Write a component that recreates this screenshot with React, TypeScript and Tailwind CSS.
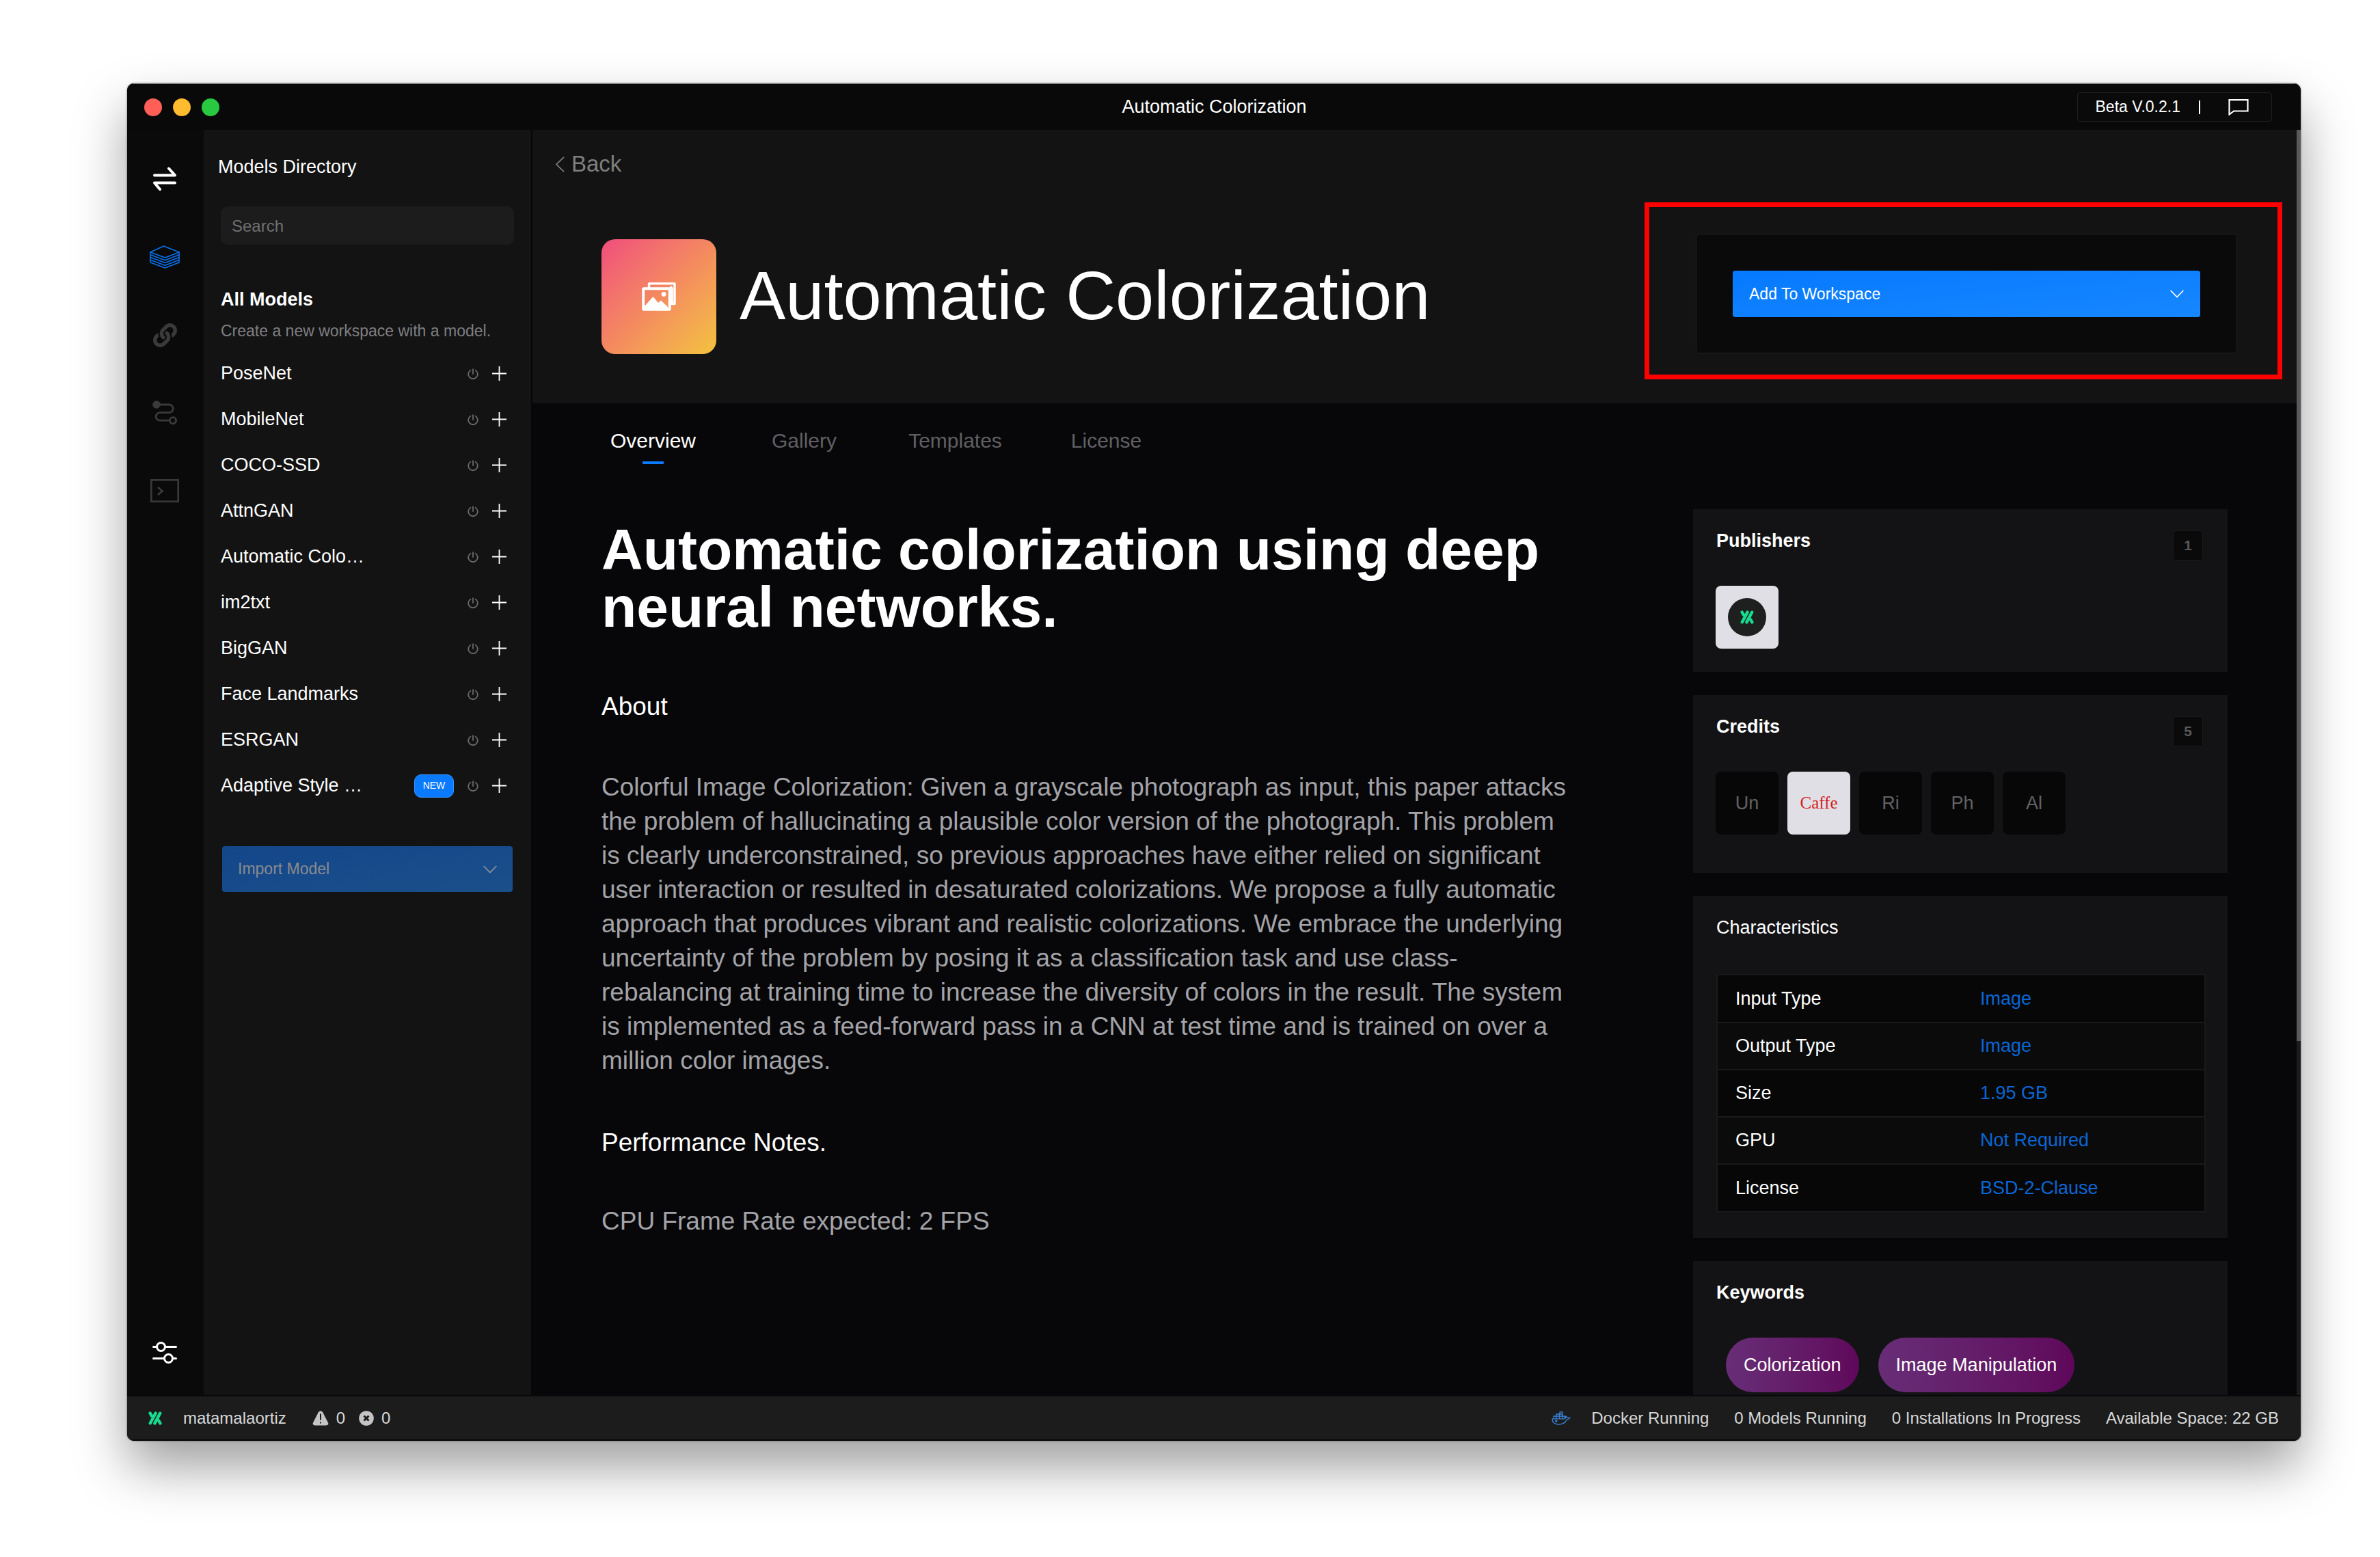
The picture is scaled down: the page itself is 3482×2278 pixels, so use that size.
import React from "react";
import { FaLink } from "react-icons/fa";

const models: { name: string; isNew?: boolean }[] = [
  { name: "PoseNet" },
  { name: "MobileNet" },
  { name: "COCO-SSD" },
  { name: "AttnGAN" },
  { name: "Automatic Colo…" },
  { name: "im2txt" },
  { name: "BigGAN" },
  { name: "Face Landmarks" },
  { name: "ESRGAN" },
  { name: "Adaptive Style …", isNew: true },
];

const tabs = ["Overview", "Gallery", "Templates", "License"];

const characteristics = [
  ["Input Type", "Image"],
  ["Output Type", "Image"],
  ["Size", "1.95 GB"],
  ["GPU", "Not Required"],
  ["License", "BSD-2-Clause"],
];

function SwapIcon() {
  return (
    <svg width="36" height="36" viewBox="0 0 36 36" fill="none" stroke="#fff" strokeWidth="4" strokeLinecap="round" strokeLinejoin="round" aria-hidden="true">
      <path d="M3 12.5H33L24 2.5" />
      <path d="M33 23.5H3L11 33" />
    </svg>
  );
}

function LayersIcon() {
  return (
    <svg width="44" height="34" viewBox="0 0 44 34" fill="none" stroke="#0a72f0" strokeWidth="1.5" strokeLinejoin="round" strokeLinecap="round" aria-hidden="true">
      <path d="M20.5 1L43 10L22.5 18L1 10Z" />
      <path d="M1 10V25L22.5 33L43 25V10" />
      <path d="M1 13.75L22.5 21.75L43 13.75" />
      <path d="M1 17.5L22.5 25.5L43 17.5" />
      <path d="M1 21.25L22.5 29.25L43 21.25" />
    </svg>
  );
}

function RouteIcon() {
  return (
    <svg width="36" height="36" viewBox="0 0 36 36" fill="none" stroke="#3a3a3b" strokeWidth="2.8" aria-hidden="true">
      <circle cx="6" cy="6" r="5.8" fill="#3a3a3b" stroke="none" />
      <path d="M6 6H24.5A5.8 5.8 0 0 1 24.5 17.6H11A5.8 5.8 0 0 0 11 29.2H25" />
      <circle cx="30" cy="29.2" r="4.6" />
    </svg>
  );
}

function TerminalIcon() {
  return (
    <svg width="42" height="34" viewBox="0 0 42 34" fill="none" stroke="#3a3a3b" strokeWidth="2.6" aria-hidden="true">
      <rect x="1.3" y="1.3" width="39.4" height="31.4" />
      <path d="M11 12L17.5 17.5L11 23" strokeWidth="2.8" />
    </svg>
  );
}

function SlidersIcon() {
  return (
    <svg width="36" height="32" viewBox="0 0 36 32" fill="none" stroke="#fff" strokeWidth="3" strokeLinecap="round" aria-hidden="true">
      <path d="M1.5 7.5H6M19 7.5H34.5M1.5 24.5H17M30 24.5H34.5" />
      <circle cx="12.5" cy="7.5" r="6" />
      <circle cx="23.5" cy="24.5" r="6" />
    </svg>
  );
}

function BrandMark() {
  return (
    <svg width="20" height="20" viewBox="0 0 20 20" fill="none" stroke="#17dc8f" strokeWidth="4.4" strokeLinecap="round" aria-hidden="true">
      <path d="M2.8 17.2L10.6 2.6M9.4 17.4L17.2 2.8" />
      <path d="M2.6 2.6L4.8 6.4M15.2 13.6L17.4 17.4" />
    </svg>
  );
}

function PowerIcon() {
  return (
    <svg width="16" height="16" viewBox="0 0 16 16" fill="none" stroke="#6e6e70" strokeWidth="1.7" strokeLinecap="round" aria-hidden="true">
      <path d="M4.4 2.6A6.8 6.8 0 1 0 11.6 2.6" />
      <path d="M8 1V8" />
    </svg>
  );
}

function PlusIcon() {
  return (
    <svg width="21" height="21" viewBox="0 0 21 21" stroke="#fff" strokeWidth="1.8" aria-hidden="true">
      <path d="M10.5 0V21M0 10.5H21" />
    </svg>
  );
}

function ChevronDown({ color }: { color: string }) {
  return (
    <svg width="20" height="12" viewBox="0 0 20 12" fill="none" stroke={color} strokeWidth="1.7" aria-hidden="true">
      <path d="M0.6 1L10 10.6L19.4 1" />
    </svg>
  );
}

function ImagesIcon() {
  return (
    <svg width="50" height="42" viewBox="0 0 50 42" aria-hidden="true">
      <path fill="none" stroke="#fff" strokeWidth="3.4" strokeLinejoin="round" d="M10.5 8V1.9H48V31.5H44V9" />
      <path fill="#fff" d="M40 8L43 5L45.5 8V27L48 33H42Z" />
      <rect x="2.2" y="9.2" width="38.6" height="30.6" rx="1" fill="none" stroke="#fff" strokeWidth="4" />
      <path fill="#fff" d="M4 35L16.5 21L24 30L28 26.5L38 36V40H4Z" />
      <circle cx="32" cy="17.5" r="3.4" fill="#fff" />
    </svg>
  );
}

function DockerIcon() {
  return (
    <svg width="28" height="20" viewBox="0 0 28 20" fill="none" stroke="#3a85d8" strokeWidth="1.3" strokeLinejoin="round" aria-hidden="true">
      <path d="M3 10V7H7V4H12V0.8H16V7H19V10.5" />
      <path d="M7 7H16M11.5 4H16M7 7V10.5M11.5 4V10.5M15.5 7V10.5" />
      <path d="M1 10.8H18.5C20.5 10.8 21 9 20 7C22 7 22.5 8.6 23 9.3C24.5 8.6 26 8.8 27 9.5C26 11.2 24.5 11.8 22.5 11.8C20 17 16 19 10.5 19C4 19 1 16 1 10.8Z" />
      <circle cx="6.8" cy="14" r="1.1" fill="#3a85d8" />
    </svg>
  );
}

function WarningIcon() {
  return (
    <svg width="24" height="22" viewBox="0 0 24 22" aria-hidden="true">
      <path fill="#c4c4c4" d="M8.8 2.2Q12 -1.6 15.2 2.2L23 17.4Q24.4 21 20.4 21.4H3.6Q-0.4 21 1 17.4Z" />
      <path d="M12 4.5V13.5M12 16.4V18.6" stroke="#1c1c1c" strokeWidth="2" />
    </svg>
  );
}

function ErrorIcon() {
  return (
    <svg width="22" height="22" viewBox="0 0 22 22" aria-hidden="true">
      <circle cx="11" cy="11" r="10.8" fill="#c4c4c4" />
      <path d="M7.5 7.5L14.5 14.5M14.5 7.5L7.5 14.5" stroke="#1c1c1c" strokeWidth="3" />
    </svg>
  );
}

function TitleBar() {
  return (
    <header className="grid h-[68px] shrink-0 grid-cols-3 items-center border-t border-[#6a6a6a] bg-[#090909] pl-[25px] pr-[42px]">
      <div className="flex gap-4">
        <button aria-label="Close" className="size-[26px] rounded-full bg-[#ff5f57]" />
        <button aria-label="Minimize" className="size-[26px] rounded-full bg-[#febc2e]" />
        <button aria-label="Zoom" className="size-[26px] rounded-full bg-[#28c840]" />
      </div>
      <div className="pl-[18px] text-center text-[27px] text-white">Automatic Colorization</div>
      <div className="flex h-[43px] items-center justify-self-end rounded-[4px] border border-[#1f1f20] bg-[#0a0a0a] pl-[26px] pr-[33px] text-[23px] text-white">
        <span>Beta V.0.2.1</span>
        <span className="ml-[27px] h-5 w-[2px] bg-white" />
        <button aria-label="Feedback" className="ml-[41px]">
          <svg width="30" height="24" viewBox="0 0 30 24" fill="none" stroke="#fff" strokeWidth="2.2" aria-hidden="true">
            <path d="M1.5 1.2H28.5V17.5H8L1.5 22.5Z" />
          </svg>
        </button>
      </div>
    </header>
  );
}

function Rail() {
  const item = "flex h-[114px] w-full items-center justify-center";
  return (
    <nav aria-label="Main" className="flex w-[112px] shrink-0 flex-col items-center bg-[#0a0a0a] pb-[38px] pr-[2px] pt-[15px]">
      <button aria-label="Workspaces" className={item}><SwapIcon /></button>
      <button aria-label="Models" className={item}><LayersIcon /></button>
      <button aria-label="Links" className={item}><FaLink size={35} color="#3a3a3b" /></button>
      <button aria-label="Routes" className={item}><RouteIcon /></button>
      <button aria-label="Console" className={item}><TerminalIcon /></button>
      <button aria-label="Settings" className="mt-auto py-2"><SlidersIcon /></button>
    </nav>
  );
}

function Sidebar() {
  return (
    <aside className="w-[481px] shrink-0 border-r-2 border-[#060606] bg-[#131314] pt-[34px]">
      <h2 className="pl-[21px] text-[27px] leading-10 text-white">Models Directory</h2>
      <div className="px-[25px]">
        <input
          aria-label="Search"
          placeholder="Search"
          className="mt-[38px] block h-14 w-full rounded-[10px] bg-[#1c1c1c] px-4 pt-[2px] text-[24px] text-white placeholder:text-[#707072]"
        />
        <h3 className="mt-[60px] text-[27px] font-bold leading-10 text-white">All Models</h3>
        <p className="mt-[11px] whitespace-nowrap text-[23px] leading-[30px] text-[#7f7f81]">
          Create a new workspace with a model.
        </p>
        <ul className="mt-[14px]">
          {models.map((m) => (
            <li key={m.name} className="flex h-[67px] items-center gap-5 pr-[11px] text-[27px] text-white">
              <a href="#" className="flex-1 whitespace-nowrap">{m.name}</a>
              {m.isNew && (
                <span className="flex h-[34px] w-[58px] items-center justify-center rounded-[10px] border border-[#3a94ff] bg-[#0a7aff] text-[14px]">
                  NEW
                </span>
              )}
              <button aria-label={"Start " + m.name}><PowerIcon /></button>
              <button aria-label={"Add " + m.name}><PlusIcon /></button>
            </li>
          ))}
        </ul>
        <div className="px-[2px] pt-[55px]">
          <button className="flex h-[67px] w-full items-center justify-between rounded-[4px] bg-linear-to-br from-[#14468a] to-[#1a4f8a] px-[23px] text-[23px] text-[#8b8b8d]">
            Import Model
            <ChevronDown color="#8f9399" />
          </button>
        </div>
      </div>
    </aside>
  );
}

function ModelHeader() {
  return (
    <section className="bg-[#131313] pb-[72px] pr-[87px] pt-[30px]">
      <a href="#" className="ml-[34px] flex w-fit items-center gap-[10px] text-[33px] leading-10 text-[#7f7f7f]">
        <svg width="13" height="23" viewBox="0 0 13 23" fill="none" stroke="#7f7f7f" strokeWidth="1.7" aria-hidden="true">
          <path d="M12 0.8L1 11.5L12 22.2" />
        </svg>
        Back
      </a>
      <div className="mt-[82px] flex items-start justify-between pl-[101px]">
        <div className="flex items-center gap-[34px] pt-2">
          <div className="flex size-[168px] items-center justify-center rounded-[20px] bg-linear-to-br from-[#f04c7b] via-[#f4895f] to-[#f2c23c]">
            <ImagesIcon />
          </div>
          <h1 className="pb-1 text-[101px] leading-[112px] text-white">Automatic Colorization</h1>
        </div>
        <div className="relative h-[175px] w-[792px] rounded-[6px] border border-[#1f1f20] bg-[#0a0a0a] px-[53px] pt-[53px]">
          <button className="flex h-[68px] w-full items-center justify-between rounded-[4px] bg-linear-to-br from-[#0579ff] to-[#1787ff] px-6 text-[23px] text-white">
            Add To Workspace
            <ChevronDown color="#fff" />
          </button>
          {/* Highlight frame drawn over the call to action */}
          <div className="pointer-events-none absolute -bottom-[39px] -left-[76px] -right-[67px] -top-[47px] border-[7px] border-[#ff0000]" />
        </div>
      </div>
    </section>
  );
}

function Card({ title, count, bold = true, className, children }: {
  title: string; count?: number; bold?: boolean; className: string; children: React.ReactNode;
}) {
  return (
    <section className={"bg-[#131315] pl-[34px] pr-8 pt-[26px] " + className}>
      <div className="flex items-start justify-between text-white">
        <h3 className={(bold ? "font-bold " : "") + "text-[27px] leading-10"}>{title}</h3>
        {count !== undefined && (
          <span className="mr-[4px] mt-[5px] flex h-11 w-11 items-center justify-center rounded-[4px] border border-[#191919] bg-[#0a0a0a] text-[21px] font-bold text-[#58585a]">
            {count}
          </span>
        )}
      </div>
      {children}
    </section>
  );
}

function Details() {
  const tile = "flex size-[92px] items-center justify-center rounded-[8px]";
  const dark = tile + " bg-[#070708] text-[27px] text-[#636365]";
  return (
    <div className="flex w-[782px] shrink-0 flex-col gap-[34px]">
      <Card title="Publishers" count={1} className="pb-[34px]">
        <div className="-ml-px mt-[37px] flex">
          <a href="#" aria-label="Publisher" className={tile + " bg-[#e0dfe5]"}>
            <span className="flex size-14 items-center justify-center rounded-full bg-[#1e201f]"><BrandMark /></span>
          </a>
        </div>
      </Card>
      <Card title="Credits" count={5} className="pb-[56px]">
        <div className="-ml-px mt-[37px] flex gap-[13px]">
          <a href="#" className={dark}>Un</a>
          <a href="#" className={tile + " bg-[#e0dfe5] font-['Liberation_Serif',serif] text-[25px] text-[#d42020]"}>Caffe</a>
          <a href="#" className={dark}>Ri</a>
          <a href="#" className={dark}>Ph</a>
          <a href="#" className={dark}>Al</a>
        </div>
      </Card>
      <Card title="Characteristics" bold={false} className="pb-[37px]">
        <div className="mt-[48px] border-2 border-[#19191a]">
          <table className="w-full table-fixed border-collapse text-left text-[27px]">
            <tbody>
              {characteristics.map(([label, value]) => (
                <tr key={label} className="h-[69px] border-b-2 border-[#19191a] bg-[#070708] last:border-b-0 even:bg-[#0b0b0b]">
                  <th scope="row" className="w-[358px] pl-[26px] font-normal text-white">{label}</th>
                  <td className="pl-[26px] text-[#0a66d6]">{value}</td>
                </tr>
              ))}
            </tbody>
          </table>
        </div>
      </Card>
      <Card title="Keywords" className="pb-[60px]">
        <div className="mt-[46px] flex gap-[28px] pl-[14px] text-[27px] text-white">
          {["Colorization", "Image Manipulation"].map((k) => (
            <a key={k} href="#" className="flex h-20 items-center rounded-full bg-linear-to-r from-[#682d77] to-[#5f075b] px-[26px]">
              {k}
            </a>
          ))}
        </div>
      </Card>
    </div>
  );
}

function Overview() {
  return (
    <article className="flex-1 pr-[177px] pt-[17px] text-[37px] leading-[50px]">
      <h2 className="text-[84px] font-bold leading-[84px] text-white">
        Automatic colorization using deep neural networks.
      </h2>
      <h3 className="mt-[79px] text-white">About</h3>
      <p className="mt-[68px] text-[#a3a3a8]">
        Colorful Image Colorization: Given a grayscale photograph as input, this paper attacks the problem of
        hallucinating a plausible color version of the photograph. This problem is clearly underconstrained, so
        previous approaches have either relied on significant user interaction or resulted in desaturated
        colorizations. We propose a fully automatic approach that produces vibrant and realistic colorizations. We
        embrace the underlying uncertainty of the problem by posing it as a classification task and use
        class-rebalancing at training time to increase the diversity of colors in the result. The system is
        implemented as a feed-forward pass in a CNN at test time and is trained on over a million color images.
      </p>
      <h3 className="mt-[70px] text-white">Performance Notes.</h3>
      <p className="mt-[65px] text-[#a3a3a8]">CPU Frame Rate expected: 2 FPS</p>
    </article>
  );
}

function StatusBar() {
  return (
    <footer className="flex h-[67px] shrink-0 items-center justify-between border-y-2 border-[#080808] bg-[#1c1c1c] pl-[31px] pr-8 text-[24px] text-[#d8d8d8]">
      <div className="flex items-center">
        <BrandMark />
        <span className="ml-[31px]">matamalaortiz</span>
        <span className="ml-[38px] flex items-center gap-[11px]"><WarningIcon />0</span>
        <span className="ml-[20px] flex items-center gap-[11px]"><ErrorIcon />0</span>
      </div>
      <div className="flex items-center gap-[37px]">
        <span className="flex items-center gap-[30px]"><DockerIcon />Docker Running</span>
        <span>0 Models Running</span>
        <span>0 Installations In Progress</span>
        <span>Available Space: 22 GB</span>
      </div>
    </footer>
  );
}

export default function App() {
  return (
    <div className="flex h-screen flex-col bg-white pb-[170px] pl-[186px] pr-[116px] pt-[122px] font-['Liberation_Sans',Arial,sans-serif]">
      <div className="flex min-h-0 flex-1 flex-col overflow-hidden rounded-[10px] bg-[#070709] shadow-[0_38px_76px_rgba(0,0,0,0.38),0_0_3px_rgba(0,0,0,0.5)]">
        <TitleBar />
        <div className="flex min-h-0 flex-1">
          <Rail />
          <Sidebar />
          <main className="min-w-0 flex-1 overflow-hidden">
            <ModelHeader />
            <nav aria-label="Model sections" className="flex pl-[66px] pt-[35px] text-[30px] leading-10">
              {tabs.map((t, i) => (
                <button
                  key={t}
                  className={"flex w-[221px] flex-col items-center gap-[10px] " + (i === 0 ? "text-white" : "text-[#606063]")}
                >
                  {t}
                  <span className={"h-1 w-[31px] rounded-[1px] " + (i === 0 ? "bg-[#0a7aff]" : "")} />
                </button>
              ))}
            </nav>
            <div className="flex pl-[101px] pr-[101px] pt-[66px]">
              <Overview />
              <Details />
            </div>
          </main>
          <div className="w-[6px] shrink-0 bg-[#1b1b1d]">
            <div className="h-[72%] bg-[#59595b]" />
          </div>
        </div>
        <StatusBar />
      </div>
    </div>
  );
}
